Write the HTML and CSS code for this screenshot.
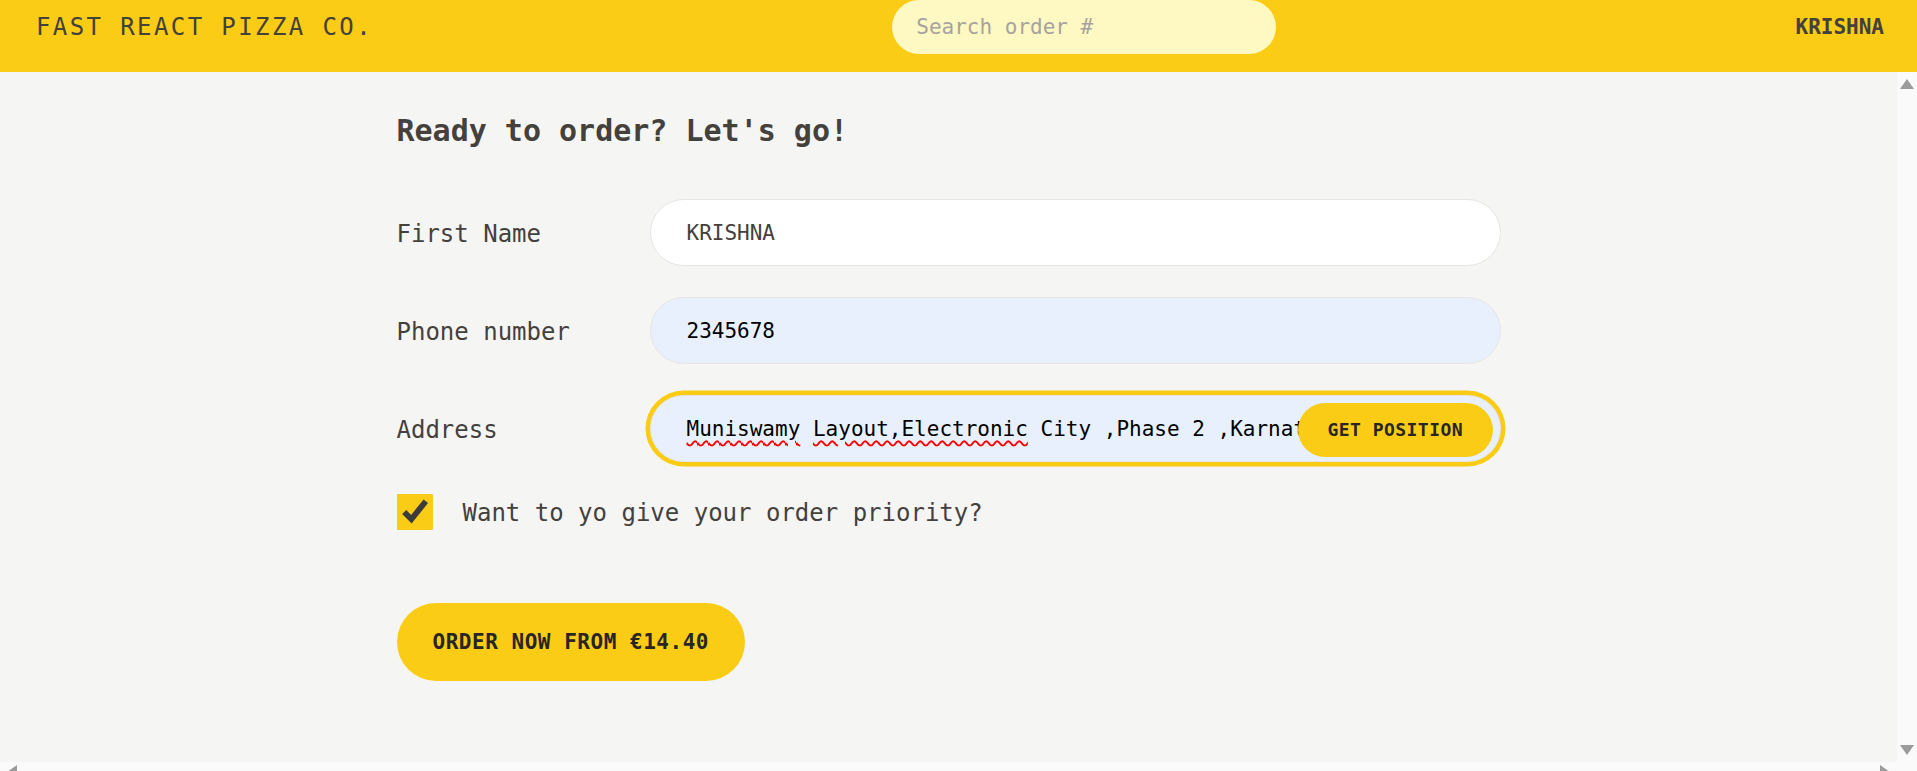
FILE: index.html
```html
<!DOCTYPE html>
<html lang="en">
<head>
<meta charset="utf-8">
<title>Fast React Pizza Co.</title>
<link rel="stylesheet" href="styles.css">
</head>
<body>
<div class="app">
  <header class="header">
    <a class="logo" href="#">Fast React Pizza Co.</a>
    <form class="search">
      <input class="search-input" type="text" placeholder="Search order #">
    </form>
    <div class="username">Krishna</div>
  </header>
  <div class="viewport">
    <main class="main">
      <div class="container">
        <h2 class="title">Ready to order? Let's go!</h2>
        <form class="order-form">
          <div class="row">
            <label class="label" for="first-name">First Name</label>
            <input class="input" id="first-name" type="text" value="KRISHNA">
          </div>
          <div class="row">
            <label class="label" for="phone">Phone number</label>
            <input class="input input-autofill" id="phone" type="tel" value="2345678">
          </div>
          <div class="row">
            <label class="label">Address</label>
            <div class="address">
              <div class="input input-autofill input-focus address-field"><span class="address-text"><span class="typo">Muniswamy</span> <span class="typo">Layout,Electronic</span> City ,Phase 2 ,Karnataka 560100</span></div>
              <button class="btn position-btn" type="button">Get position</button>
            </div>
          </div>
          <div class="priority">
            <input class="checkbox" type="checkbox" id="priority" checked>
            <label class="priority-label" for="priority">Want to yo give your order priority?</label>
          </div>
          <button class="btn order-btn" type="button">Order now from €14.40</button>
        </form>
      </div>
    </main>
    <div class="scrollbar scrollbar-v" aria-hidden="true">
      <span class="scroll-btn"><span class="arrow arrow-up"></span></span>
      <span class="scroll-btn"><span class="arrow arrow-down"></span></span>
    </div>
    <div class="scrollbar scrollbar-h" aria-hidden="true">
      <span class="scroll-btn"><span class="arrow arrow-left"></span></span>
      <span class="scroll-btn"><span class="arrow arrow-right"></span></span>
    </div>
    <div class="scrollbar-corner" aria-hidden="true"></div>
  </div>
</div>
</body>
</html>
```

FILE: styles.css
```css
* {
  box-sizing: border-box;
  margin: 0;
  padding: 0;
}

html,
body {
  height: 100%;
  overflow: hidden;
}

body {
  font-family: "DejaVu Sans Mono", "Liberation Mono", monospace;
  color: #44403c;
  background: #f5f5f4;
}

.app {
  height: 782px;
  display: grid;
  grid-template-rows: 72px 1fr;
}

/* Header */
.header {
  display: flex;
  align-items: center;
  justify-content: space-between;
  padding: 0 33px 18px 36px;
  background: #facc15;
  text-transform: uppercase;
}

.logo {
  font-size: 24px;
  line-height: 36px;
  letter-spacing: 2.4px;
  color: #44403c;
  text-decoration: none;
}

.search-input {
  display: block;
  width: 384px;
  height: 54px;
  border: 0;
  border-radius: 9999px;
  background: #fef9c3;
  padding: 0 24px;
  font-family: inherit;
  font-size: 21px;
  color: #44403c;
  outline: none;
}

.search-input::placeholder {
  color: #a8a29e;
}

.username {
  font-size: 21px;
  line-height: 30px;
  font-weight: 600;
}

/* Scroll area with its scrollbars */
.viewport {
  min-height: 0;
  display: grid;
  grid-template-columns: 1fr 20px;
  grid-template-rows: 1fr 20px;
}

.main {
  overflow: hidden;
  background: #f5f5f4;
}

.scrollbar {
  display: flex;
  justify-content: space-between;
  background: #fafafa;
}

.scrollbar-v {
  flex-direction: column;
}

.scrollbar-corner {
  background: #fafafa;
}

.scroll-btn {
  display: flex;
  align-items: center;
  justify-content: center;
}

.scrollbar-v .scroll-btn {
  width: 20px;
  height: 24px;
}

.scrollbar-h .scroll-btn {
  width: 24px;
  height: 20px;
}

.arrow {
  width: 0;
  height: 0;
  border-style: solid;
  border-color: transparent;
}

.arrow-up {
  border-width: 0 7px 10px;
  border-bottom-color: #9b9b9b;
}

.arrow-down {
  border-width: 10px 7px 0;
  border-top-color: #9b9b9b;
}

.arrow-left {
  border-width: 7px 10px 7px 0;
  border-right-color: #9b9b9b;
}

.arrow-right {
  border-width: 7px 0 7px 10px;
  border-left-color: #9b9b9b;
}

.container {
  max-width: 1152px;
  margin: 0 auto;
  padding: 38px 24px 36px;
}

.title {
  font-size: 30px;
  line-height: 42px;
  font-weight: 600;
  margin-bottom: 47px;
}

/* Form */
.row {
  display: flex;
  align-items: center;
  margin-bottom: 31px;
}

.label {
  flex: 0 0 253px;
  font-size: 24px;
  line-height: 36px;
  padding-top: 2px;
}

.input {
  flex: 1;
  min-width: 0;
  height: 67px;
  border: 1.5px solid #e7e5e4;
  border-radius: 9999px;
  background: #fff;
  padding: 0 36px;
  font-family: inherit;
  font-size: 21px;
  line-height: 30px;
  color: #44403c;
  outline: none;
}

.input-autofill {
  background: #e8f0fe;
  color: #000;
}

.address {
  position: relative;
  flex: 1;
  display: flex;
}

.address-field {
  display: flex;
  align-items: center;
  overflow: hidden;
}

.address-text {
  white-space: nowrap;
}

.input-focus {
  box-shadow: 0 0 0 4.5px #facc15;
}

.typo {
  text-decoration: underline wavy #f00;
  text-decoration-thickness: 1.5px;
  text-underline-offset: 4px;
}

.btn {
  border: 0;
  border-radius: 9999px;
  background: #facc15;
  color: #292524;
  font-family: inherit;
  font-weight: 600;
  text-transform: uppercase;
  cursor: pointer;
}

.position-btn {
  position: absolute;
  top: 7.5px;
  right: 7.5px;
  height: 54px;
  padding: 0 30px;
  font-size: 18px;
  letter-spacing: 0.45px;
  z-index: 5;
}

.priority {
  display: flex;
  align-items: center;
  gap: 30px;
  margin-bottom: 72px;
}

.checkbox {
  width: 36px;
  height: 36px;
  margin: 0;
  accent-color: #facc15;
}

.priority-label {
  font-size: 24px;
  line-height: 36px;
  font-weight: 500;
  padding-top: 2px;
}

.order-btn {
  height: 78px;
  padding: 0 36px;
  font-size: 21px;
  letter-spacing: 0.525px;
}
```
